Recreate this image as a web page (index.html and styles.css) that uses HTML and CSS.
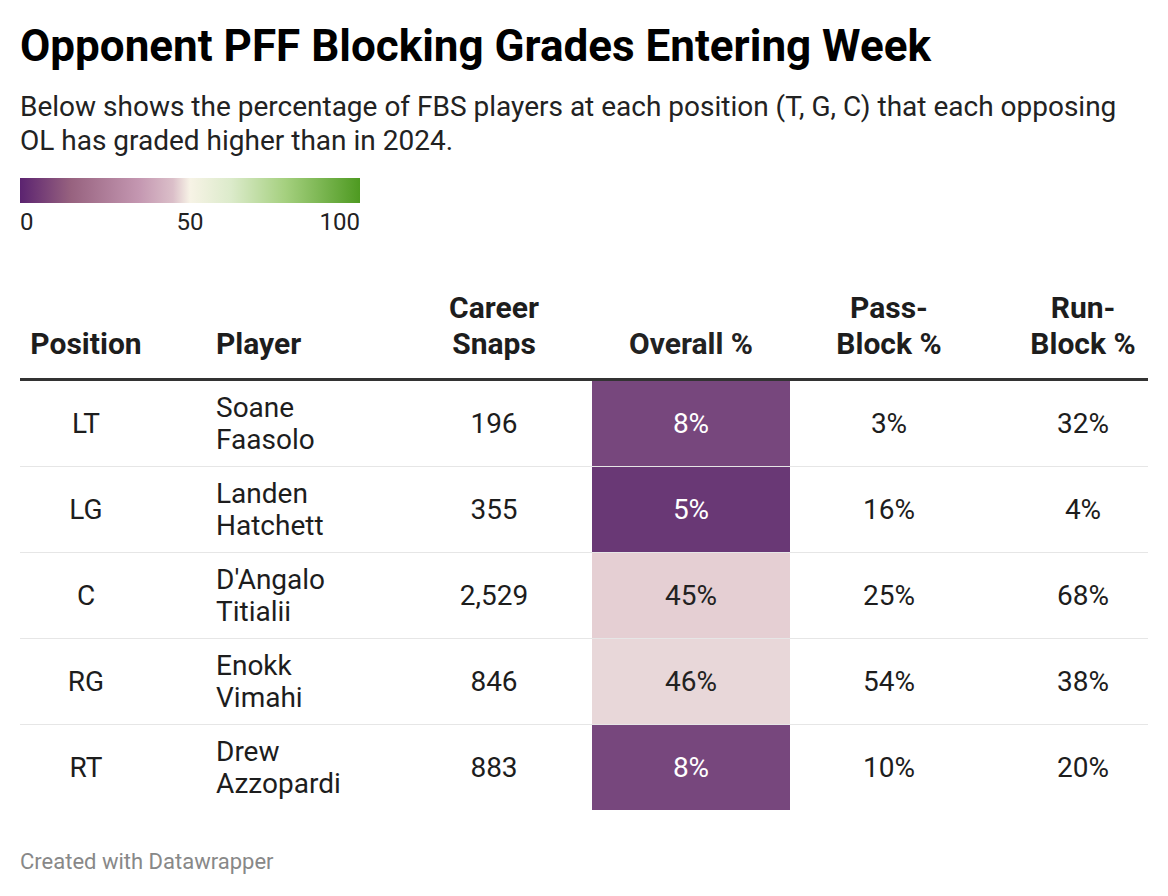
FILE: index.html
```html
<!DOCTYPE html>
<html>
<head>
<meta charset="utf-8">
<link rel="stylesheet" href="styles.css">
</head>
<body>
<div class="chart">
  <h1 class="title">Opponent PFF Blocking Grades Entering Week</h1>
  <p class="desc">Below shows the percentage of FBS players at each position (T, G, C) that each opposing OL has graded higher than in 2024.</p>
  <div class="legend">
    <div class="legend-bar"></div>
    <div class="legend-labels"><span class="l-min">0</span><span class="l-mid">50</span><span class="l-max">100</span></div>
  </div>
  <div class="table">
    <div class="row head">
      <div class="cell c-pos">Position</div>
      <div class="cell c-player">Player</div>
      <div class="cell c-snaps">Career<br>Snaps</div>
      <div class="cell c-overall">Overall %</div>
      <div class="cell c-pass">Pass-<br>Block %</div>
      <div class="cell c-run">Run-<br>Block %</div>
    </div>
    <div class="row">
      <div class="cell c-pos">LT</div>
      <div class="cell c-player">Soane<br>Faasolo</div>
      <div class="cell c-snaps">196</div>
      <div class="cell c-overall dark" style="background:#77477d">8%</div>
      <div class="cell c-pass">3%</div>
      <div class="cell c-run">32%</div>
    </div>
    <div class="row">
      <div class="cell c-pos">LG</div>
      <div class="cell c-player">Landen<br>Hatchett</div>
      <div class="cell c-snaps">355</div>
      <div class="cell c-overall dark" style="background:#693875">5%</div>
      <div class="cell c-pass">16%</div>
      <div class="cell c-run">4%</div>
    </div>
    <div class="row">
      <div class="cell c-pos">C</div>
      <div class="cell c-player">D'Angalo<br>Titialii</div>
      <div class="cell c-snaps">2,529</div>
      <div class="cell c-overall" style="background:#e5cfd3">45%</div>
      <div class="cell c-pass">25%</div>
      <div class="cell c-run">68%</div>
    </div>
    <div class="row">
      <div class="cell c-pos">RG</div>
      <div class="cell c-player">Enokk<br>Vimahi</div>
      <div class="cell c-snaps">846</div>
      <div class="cell c-overall" style="background:#e8d7d9">46%</div>
      <div class="cell c-pass">54%</div>
      <div class="cell c-run">38%</div>
    </div>
    <div class="row last">
      <div class="cell c-pos">RT</div>
      <div class="cell c-player">Drew<br>Azzopardi</div>
      <div class="cell c-snaps">883</div>
      <div class="cell c-overall dark" style="background:#77477d">8%</div>
      <div class="cell c-pass">10%</div>
      <div class="cell c-run">20%</div>
    </div>
  </div>
  <div class="footer">Created with Datawrapper</div>
</div>
</body>
</html>
```

FILE: styles.css
```css
html, body {
  margin: 0;
  padding: 0;
  background: #ffffff;
}
body {
  font-family: Roboto, "Liberation Sans", sans-serif;
  color: #1d1d1d;
}
.chart {
  padding: 20px 20px 0 20px;
  width: 1128px;
}
.title {
  margin: 0;
  font-size: 44px;
  line-height: 52px;
  font-weight: 700;
  color: #000;
}
.desc {
  margin: 18px 0 0 0;
  font-size: 28px;
  line-height: 34px;
  color: #222;
}
.legend {
  margin-top: 20px;
  width: 340px;
}
.legend-bar {
  height: 25px;
  background: linear-gradient(to right, #5b2370 0%, #97627f 15%, #c497b1 35%, #dbbfc9 45%, #f7f3e6 50%, #dcebcb 62%, #a5d07f 78%, #4e9a21 100%);
}
.legend-labels {
  display: grid;
  grid-template-columns: 1fr 1fr 1fr;
  padding-top: 4px;
  font-size: 24px;
  line-height: 30px;
  color: #222;
}
.l-min { justify-self: start; }
.l-mid { justify-self: center; }
.l-max { justify-self: end; }
.table {
  margin-top: 42px;
  display: flex;
  flex-direction: column;
}
.row {
  box-sizing: border-box;
  display: grid;
  grid-template-columns: 132px 244px 196px 198px 198px 160px;
  border-bottom: 1px solid #e6e6e6;
  height: 86px;
}
.row.last {
  border-bottom: none;
  height: 85px;
}
.row.head {
  border-bottom: 3px solid #333;
  height: 102px;
  color: #1d1d1d;
}
.cell {
  display: flex;
  align-items: center;
  justify-content: center;
  text-align: center;
  font-size: 28px;
  line-height: 32px;
}
.head .cell {
  align-items: flex-end;
  font-weight: 700;
  font-size: 30px;
  line-height: 36px;
  padding-bottom: 16px;
}
.c-player {
  justify-content: flex-start;
  text-align: left;
  padding-left: 64px;
}
.c-run {
  padding-left: 30px;
}
.c-overall {
  color: #222;
}
.c-overall.dark {
  color: #fff;
}
.footer {
  margin-top: 39px;
  font-size: 22px;
  color: #888;
}
```
